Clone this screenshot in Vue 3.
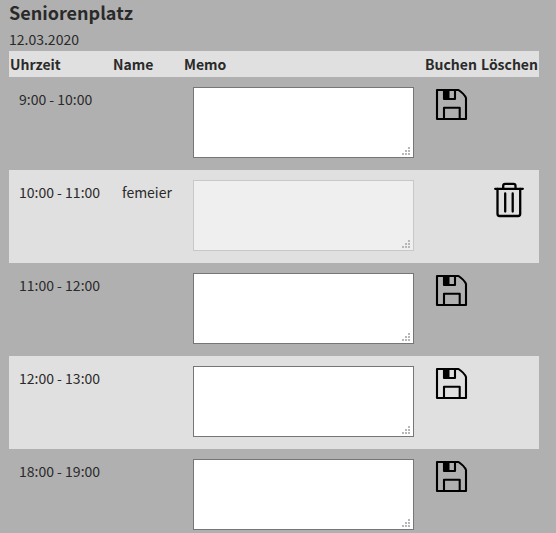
<script setup>
import { reactive } from 'vue'

const slots = reactive([
  { time: '9:00 - 10:00', name: '', memo: '' },
  { time: '10:00 - 11:00', name: 'femeier', memo: '' },
  { time: '11:00 - 12:00', name: '', memo: '' },
  { time: '12:00 - 13:00', name: '', memo: '' },
  { time: '18:00 - 19:00', name: '', memo: '' },
])
</script>

<template>
  <main class="page">
    <h1 class="title">Seniorenplatz</h1>
    <p class="date">12.03.2020</p>
    <table class="slots">
      <colgroup>
        <col class="col-time" />
        <col class="col-name" />
        <col />
        <col class="col-book" />
        <col class="col-delete" />
      </colgroup>
      <thead>
        <tr>
          <th>Uhrzeit</th>
          <th>Name</th>
          <th>Memo</th>
          <th>Buchen</th>
          <th>Löschen</th>
        </tr>
      </thead>
      <tbody>
        <tr v-for="slot in slots" :key="slot.time">
          <td>{{ slot.time }}</td>
          <td>{{ slot.name }}</td>
          <td>
            <div class="memo">
              <textarea v-model="slot.memo" :disabled="!!slot.name" :aria-label="'Memo ' + slot.time"></textarea>
              <svg class="grip" width="8" height="8" viewBox="0 0 8 8" aria-hidden="true">
                <path d="M6 0h2v2h-2zM3 3h2v2h-2zM6 3h2v2h-2zM0 6h2v2h-2zM3 6h2v2h-2zM6 6h2v2h-2z" />
              </svg>
            </div>
          </td>
          <td>
            <button v-if="!slot.name" type="button" class="action" :aria-label="'Buchen ' + slot.time">
              <svg width="35" height="35" viewBox="0 0 35 35" aria-hidden="true">
                <g fill="none" stroke="#000" stroke-width="2.1" stroke-linejoin="round">
                  <path d="M3 3h21.500q6 4 7.500 8v21h-29z" />
                  <path d="M10 3v9h11v-9" />
                  <path d="M10 32v-11.200h15.700v11.200" />
                </g>
                <path d="M10 3h5.500v9h-5.500z" />
              </svg>
            </button>
          </td>
          <td>
            <button v-if="slot.name" type="button" class="action" :aria-label="'Löschen ' + slot.time">
              <svg width="38" height="38" viewBox="0 0 38 38" aria-hidden="true">
                <g fill="none" stroke="#000" stroke-width="2.3" stroke-linecap="round" stroke-linejoin="round">
                  <path d="M5.200 8.800h27.600" />
                  <path d="M13.200 8.800v-3q0-2 2-2h8.300q2 0 2 2v3" />
                  <path d="M7.500 8.800v25q0 2.200 2 2.200h18.700q2 0 2-2.200v-25" />
                  <path d="M15.200 13.500v18M22.700 13.500v18" />
                </g>
              </svg>
            </button>
          </td>
        </tr>
      </tbody>
    </table>
  </main>
</template>

<style>
html {
  background: #b0b0b0;
  scrollbar-width: none;
}
</style>

<style scoped>
.page {
  padding: 0 17px 0 9px;
  color: #2a2a2a;
  font-family: "Noto Sans CJK SC", sans-serif;
  font-size: 14px;
  line-height: 24px;
}
.title {
  margin: 0;
  font-size: 18px;
  line-height: 24px;
  font-weight: 700;
}
.date {
  margin: 0;
  padding: 4px 0 0;
  line-height: 23px;
}
.slots {
  width: 100%;
  table-layout: fixed;
  border-collapse: collapse;
}
.col-time {
  width: 103px;
}
.col-name {
  width: 71px;
}
.col-book {
  width: 56px;
}
.col-delete {
  width: 59px;
}
th {
  padding: 1px;
  text-align: left;
  font-weight: 700;
  white-space: nowrap;
  background: #e0e0e0;
}
td {
  height: 73px;
  padding: 10px;
  vertical-align: top;
  white-space: nowrap;
}
tbody tr:nth-child(even) {
  background: #e0e0e0;
}
.memo {
  position: relative;
}
textarea {
  display: block;
  box-sizing: border-box;
  width: 100%;
  height: 71px;
  margin: 0;
  padding: 2px;
  border: 1px solid #767676;
  border-radius: 0;
  background: #fff;
  font: inherit;
  resize: none;
}
textarea:disabled {
  border-color: #c8c8c8;
  background: #efefef;
}
.grip {
  position: absolute;
  right: 4px;
  bottom: 3px;
  fill: #b8b8b8;
}
.action {
  display: block;
  padding: 0;
  border: 0;
  background: none;
}
.action svg {
  display: block;
}
</style>
